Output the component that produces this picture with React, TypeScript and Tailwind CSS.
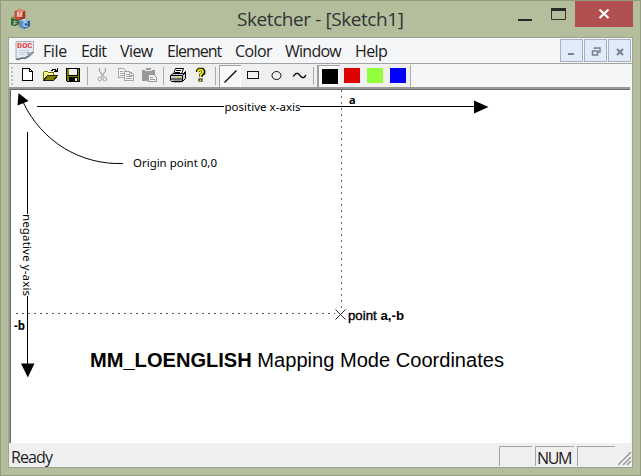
import React from "react";

const ui = "font-['Open_Sans','Noto_Sans',sans-serif]";

const menus = [
  { label: "File", box: "w-[38px] tracking-[-0.4px]" },
  { label: "Edit", box: "w-[39px] tracking-[-0.8px]" },
  { label: "View", box: "w-[47px] tracking-[-0.6px]" },
  { label: "Element", box: "w-[68px] tracking-[-1px]" },
  { label: "Color", box: "w-[50px] tracking-[-0.6px]" },
  { label: "Window", box: "w-[70px] tracking-[-0.75px]" },
  { label: "Help", box: "w-[40px] tracking-[-0.6px]" },
];

function AppIcon() {
  return (
    <svg width="19" height="20" viewBox="0 0 20 21">
      <path d="M0 9l4-2 5 2v7l-5 2-4-1z" fill="#3d6b34" />
      <path d="M0 9l4-2 5 2-4 2z" fill="#8cab6c" />
      <path d="M4 2l6-2 5 2v9l-5 1-6-2z" fill="#a52f21" />
      <path d="M4 2l6-2 5 2-5 2z" fill="#e18a75" />
      <path d="M4 2l6 2v8l-6-2z" fill="#c94a37" />
      <path d="M9 12l5-2 6 2v6l-6 3-5-2z" fill="#315e9c" />
      <path d="M9 12l5-2 6 2-6 2z" fill="#a8cae8" />
      <path d="M9 12l5 2v7l-5-2z" fill="#5a8fc8" />
      <text x="6" y="8.5" fontSize="7.5" fontWeight="700" fill="#f8e4e1" fontFamily="Liberation Sans">M</text>
      <text x="12.5" y="18.8" fontSize="7" fontWeight="700" fill="#d9e8fa" fontFamily="Liberation Sans">C</text>
      <text x="2.5" y="16.5" fontSize="6" fontWeight="700" fill="#d9e8cd" fontFamily="Liberation Sans">F</text>
    </svg>
  );
}

function DocIcon() {
  return (
    <svg width="20" height="21" viewBox="0 0 20 21">
      <path d="M1 1.5h17.500v11.500l-4.500 4-3-.5-3 2-3-.5-4 1.500z" fill="#e4ebf2" stroke="#a9b0b7" />
      <path d="M1 19l2.500.5 3.500-1.500 3 .5 3-2 5-4.500" fill="none" stroke="#68747e" strokeWidth="1.6" />
      <path d="M4 10.500h10M4 12.500h8M4 14.500h6" stroke="#c3d2dd" />
      <path d="M12.500 16.500l-.5-4.500 6 .5z" fill="#9aaab6" />
      <text x="2" y="8" fontSize="8" fontWeight="700" fill="#ef3b3c" fontFamily="Liberation Mono" textLength="15.5" lengthAdjust="spacingAndGlyphs">DOC</text>
    </svg>
  );
}

function Toolbar() {
  return (
    <svg width="402" height="23" viewBox="9 64 402 23" shapeRendering="crispEdges">
      <path d="M11 67h2v2h-2zM11 71h2v2h-2zM11 75h2v2h-2zM11 79h2v2h-2zM11 83h2v2h-2z" fill="#c0c0c0" />
      <path d="M22.5 68.5h7l3 3v9h-10z" fill="#fff" stroke="#000" />
      <path d="M29.5 68.5v3h3" fill="none" stroke="#000" />
      <path d="M43.5 80.5v-8l1-1h3l1 1h5v3" fill="#ffff90" stroke="#6f6d12" />
      <path d="M43.5 80.5l4-5h10l-4 5z" fill="#808000" stroke="#25240a" />
      <path d="M51 70h1v-1h3v1h1v1h1M57 68v4M54 71h4" fill="none" stroke="#000" />
      <path d="M66.5 68.5h13v13h-12l-1-1z" fill="#808000" stroke="#000" />
      <path d="M69 69h8v6h-8z" fill="#f0f0f0" />
      <path d="M68 75h10v1H68zM69 77h9v5h-9zM77 69h1v6h-1z" />
      <path d="M75 78h2v3h-2z" fill="#eee" />
      <path d="M87.5 67v18M163.5 67v18M215.5 67v18M313.5 67v18" stroke="#a9a9a9" />
      <g fill="none" stroke="#a5a5a5" shapeRendering="auto">
        <path d="M99.5 68v3l4.5 6M105.5 68v3l-4.5 6" strokeWidth="1.2" />
        <circle cx="99.8" cy="79" r="1.9" /><circle cx="104.8" cy="79" r="1.9" />
      </g>
      <g fill="#f4f4f4" stroke="#a5a5a5">
        <path d="M118.5 68.5h5l3 3v6h-8z" /><path d="M124.5 71.5h5l4 3v6h-9z" />
        <path d="M120 71.5h3M120 73.5h4M120 75.5h4M126 74.5h3M126 76.5h6M126 78.5h6M129.5 72v3h4" />
      </g>
      <path d="M142 70h4v-2h5v2h4v11h-13z" fill="#999" />
      <path d="M145 70.5h7" stroke="#eee" />
      <path d="M148.5 74.5h5l3 3v4h-8z" fill="#f2f2f2" stroke="#999" />
      <path d="M150 77.5h3M150 79.5h5" stroke="#999" />
      <g stroke="#000" shapeRendering="auto">
        <path d="M173.5 74l2-5.5h8l-2 5.5z" fill="#fff" />
        <path d="M176 70.5h5M175 72.5h5" />
        <path d="M170.5 75.5l3-2h10l2-2v7l-3 3h-11l-1-1z" fill="#ccc" />
        <path d="M171 75.5h11.5l3-3M182.5 76v5M171 79h11" fill="none" />
        <path d="M177 77.5h3" stroke="#e9d600" />
        <path d="M173.5 81.5h8" strokeWidth="1.5" />
      </g>
      <g fill="none" shapeRendering="auto">
        <path d="M197.7 72v-1l1.5-1.5h3l1.3 1.5v2l-2.6 2v2" stroke="#000" strokeWidth="3.6" />
        <path d="M198 72v-1l1.4-1.2h2.3l1.2 1.2v1.5l-2.4 2.2V77" stroke="#f4e600" strokeWidth="1.9" />
        <path d="M198.500 78.500h4v3h-4z" fill="#000" /><path d="M199.500 79.300h2v1.700h-2z" fill="#f4e600" />
      </g>
      <path d="M219 65h22v22h-22z" fill="#f8f8f8" />
      <path d="M219.5 87V65.5H241" fill="none" stroke="#a0a0a0" />
      <path d="M240.5 66v21" stroke="#fff" />
      <path d="M224.5 82.5l12-12" stroke="#000" strokeWidth="1.3" shapeRendering="auto" />
      <path d="M247.5 71.5h11v7h-11z" fill="none" stroke="#111" />
      <ellipse cx="276.5" cy="75.5" rx="4.5" ry="4" fill="none" stroke="#111" shapeRendering="auto" />
      <path d="M293 76.5l3-3h2l4 4h2l2-2.5" fill="none" stroke="#111" strokeWidth="1.3" shapeRendering="auto" />
      <path d="M318 65h22v22h-22z" fill="#f8f8f8" />
      <path d="M317 65h2v22h-2zM317 65h23v1h-23z" fill="#a0a0a0" />
      <path d="M322 69h16v15h-16z" fill="#000" />
      <path d="M344 68h16v15h-16z" fill="#df0000" />
      <path d="M367 68h16v15h-16z" fill="#91ff3c" />
      <path d="M390 68h16v15h-16z" fill="#00f" />
      <path d="M410.5 65v22" stroke="#aaa" />
    </svg>
  );
}

function Drawing() {
  return (
    <svg className="block" width="620" height="353" viewBox="11 90 620 353" fontFamily="'Noto Sans','Open Sans',sans-serif">
      <g stroke="#000" fill="none">
        <path d="M37 106.5H224M300 106.5H475M27.5 132V214M27.5 296V364" shapeRendering="crispEdges" />
        <path d="M23 102C42 142 81 165 123 163.5" />
        <path d="M341.5 90V309" stroke="#666" strokeDasharray="2 4" shapeRendering="crispEdges" />
        <path d="M16 313.5H335" stroke="#555" strokeDasharray="2 4" shapeRendering="crispEdges" />
        <path d="M335.5 309.5l10 10M345.5 309.5l-10 10" stroke="#222" />
      </g>
      <path d="M474 100.5L488.5 107 474 113.5zM21 363.5h13.5L27.8 377.5zM18.5 93L17.5 105.5 28.5 101z" />
      <g fontSize="11.5">
        <text x="224.5" y="110.5" textLength="76">positive x-axis</text>
        <text x="133" y="167" textLength="84">Origin point 0,0</text>
        <text transform="translate(22.8 214) rotate(90)" textLength="82">negative y-axis</text>
      </g>
      <text x="349" y="104" fontSize="11" fontWeight="700">a</text>
      <text x="14" y="329.5" fontSize="11.5" fontWeight="700" textLength="11">-b</text>
      <g fontFamily="'Liberation Sans',Arial,sans-serif">
        <text x="348" y="319.5" fontSize="12.5" fontWeight="700" textLength="56" lengthAdjust="spacingAndGlyphs"><tspan fontWeight="400" stroke="#000" strokeWidth=".35">point </tspan>a,-b</text>
        <text x="90" y="366.5" fontSize="20" textLength="414" lengthAdjust="spacingAndGlyphs"><tspan fontWeight="700">MM_LOENGLISH</tspan> Mapping Mode Coordinates</text>
      </g>
    </svg>
  );
}

function ChildButton({ children }: { children: React.ReactNode }) {
  return <div className="h-[23px] w-[23px] border border-[#a5b0c2] bg-[#e1eaf8]"><svg width="21" height="21" fill="none" stroke="#77818d">{children}</svg></div>;
}

export default function App() {
  return (
    <main className={`flex h-[476px] w-[641px] flex-col overflow-hidden border border-[#929a80] bg-[#b4be9d] px-[7px] text-[#202020] ${ui}`}>
      <header className="flex h-9 shrink-0 items-start">
        <div className="ml-[3px] mt-[8px] w-[154px]"><AppIcon /></div>
        <h1 className="ml-[72px] mt-[4px] w-[179px] whitespace-nowrap text-[19px] leading-7 tracking-[-0.42px] text-[#333]">Sketcher - [Sketch1]</h1>
        <svg className="ml-[101px] mt-[6px]" width="50" height="15">
          <path d="M1 12h14v2H1z" fill="#282828" />
          <path d="M34.5 1.5h14v11h-14z" fill="none" stroke="#333" /><path d="M34 1h15v3H34z" fill="#282828" />
        </svg>
        <div className="ml-[8px] flex h-[26px] w-[58px] items-center justify-center bg-[#b05051]">
          <svg width="12" height="10"><path d="M1.5.5l9 8.5M10.5.5l-9 8.5" stroke="#fff" strokeWidth="2.1" /></svg>
        </div>
      </header>
      <section className="flex h-[431px] shrink-0 flex-col border border-[#9ca28d] bg-[#f5f6f7]">
        <nav className="flex h-[26px] shrink-0 items-center border-b border-[#a3a3a3] bg-[#f5f6f8] text-[16px] leading-5">
          <div className="ml-[6px] w-[28px]"><DocIcon /></div>
          {menus.map((m) => <span key={m.label} className={`mt-px whitespace-nowrap ${m.box}`}>{m.label}</span>)}
          <div className="ml-auto mr-[1px] flex gap-px">
            <ChildButton><path d="M7 14h6" strokeWidth="2" /></ChildButton>
            <ChildButton><path d="M9.5 9V8h5.5v4h-2M9 8h6.5M7.5 11h5v4h-5z" strokeWidth="1.5" /></ChildButton>
            <ChildButton><path d="M8 9l6 6M14 9l-6 6" strokeWidth="2" /></ChildButton>
          </div>
        </nav>
        <div className="flex h-[23px] shrink-0 bg-[#f5f6f7]"><div className="w-[402px] bg-[#f0f0f0]"><Toolbar /></div></div>
        <div className="mr-[2px] h-[356px] shrink-0 border-l-2 border-t-2 border-[#999] bg-white"><div className="-ml-px border-l border-t border-[#696969]"><Drawing /></div></div>
        <footer className="flex h-[24px] items-start bg-[#f0f0f0] text-[16px] leading-[22px]">
          <span className="ml-[2px] mt-[3px] w-[488px] tracking-[-0.9px]">Ready</span>
          <div className="mt-[3px] flex gap-[3px] leading-[22px]">
            <div className="h-[20px] w-[33px] border-l border-t border-[#a5a5a5]" />
            <div className="h-[20px] w-[39px] border-l border-t border-[#a5a5a5] pl-px tracking-[-1.3px]">NUM</div>
            <div className="h-[20px] w-[38px] border-l border-t border-[#a5a5a5]" />
          </div>
          <svg className="ml-[3px] mt-[9px]" width="14" height="14"><path d="M0 13L13 0M5 13l8-8M9 13l4-4" stroke="#999" strokeWidth="1.5" /></svg>
        </footer>
      </section>
    </main>
  );
}
